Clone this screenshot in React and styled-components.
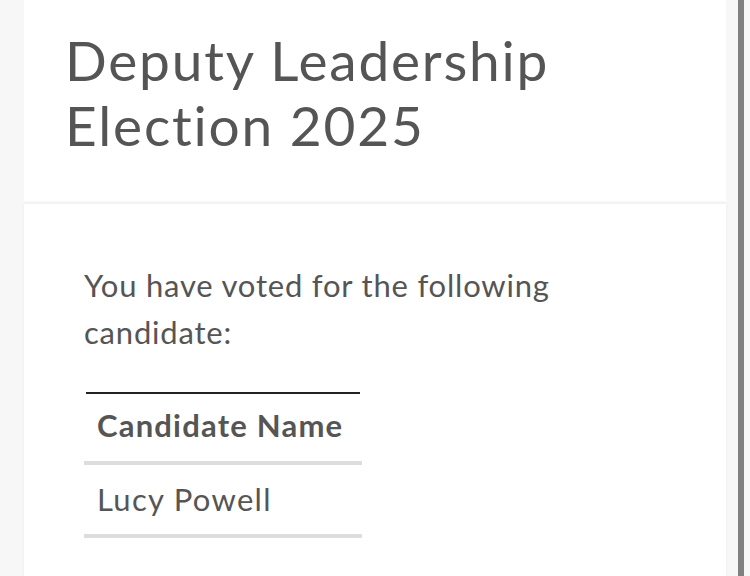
import React from 'react'
import styled, { createGlobalStyle } from 'styled-components';

const GlobalStyle = createGlobalStyle`
  html, body {
    margin: 0;
    padding: 0;
    background: #f7f7f7;
  }
  body {
    font-family: 'Lato', 'Open Sans', sans-serif;
    color: #555555;
    overflow: hidden;
  }
`;

const App = () => {
    return (
        <>
            <GlobalStyle />
            <Page>
                <HeaderCard>
                    <Title>Deputy Leadership Election 2025</Title>
                </HeaderCard>
                <BodyCard>
                    <Intro>You have voted for the following candidate:</Intro>
                    <Table>
                        <thead>
                            <tr>
                                <Th>Candidate Name</Th>
                            </tr>
                        </thead>
                        <tbody>
                            <tr>
                                <Td>Lucy Powell</Td>
                            </tr>
                        </tbody>
                    </Table>
                </BodyCard>
            </Page>
            <ScrollThumb />
        </>
    )
}

export default App;

const Page = styled.div`
    display: flex;
    flex-direction: column;
    gap: 3px;
    padding: 0 24px;
    min-height: 576px;
`;

const HeaderCard = styled.div`
    background: #ffffff;
    padding: 28px 40px 44px 41px;
`;

const Title = styled.h1`
    margin: 0;
    max-width: 560px;
    font-weight: 400;
    font-size: 55px;
    line-height: 64.5px;
    letter-spacing: 1.8px;
    color: #555555;
`;

const BodyCard = styled.div`
    flex: 1;
    background: #ffffff;
    box-shadow: 0 0 3px rgba(0, 0, 0, 0.06);
    padding: 58px 60px 40px 60px;
`;

const Intro = styled.p`
    margin: 0 0 37px 0;
    max-width: 490px;
    font-size: 31px;
    line-height: 46.5px;
    letter-spacing: 0.8px;
`;

const Table = styled.table`
    border-collapse: collapse;
    width: 278px;
    position: relative;

    &::before {
        content: '';
        position: absolute;
        top: 0;
        left: 2px;
        right: 2px;
        height: 2px;
        background: #222222;
    }
`;

const Th = styled.th`
    text-align: left;
    font-weight: 700;
    font-size: 31px;
    line-height: 46.5px;
    letter-spacing: 1.2px;
    padding: 10px 13px 12px 13px;
    border-bottom: 4px solid #dddddd;
`;

const Td = styled.td`
    font-size: 31px;
    line-height: 46.5px;
    letter-spacing: 1.3px;
    padding: 11px 13px 12px 13px;
    border-bottom: 4px solid #dddddd;
`;

const ScrollThumb = styled.div`
    position: fixed;
    top: 0;
    bottom: 0;
    left: 738px;
    width: 6px;
    background: #808080;
`;
